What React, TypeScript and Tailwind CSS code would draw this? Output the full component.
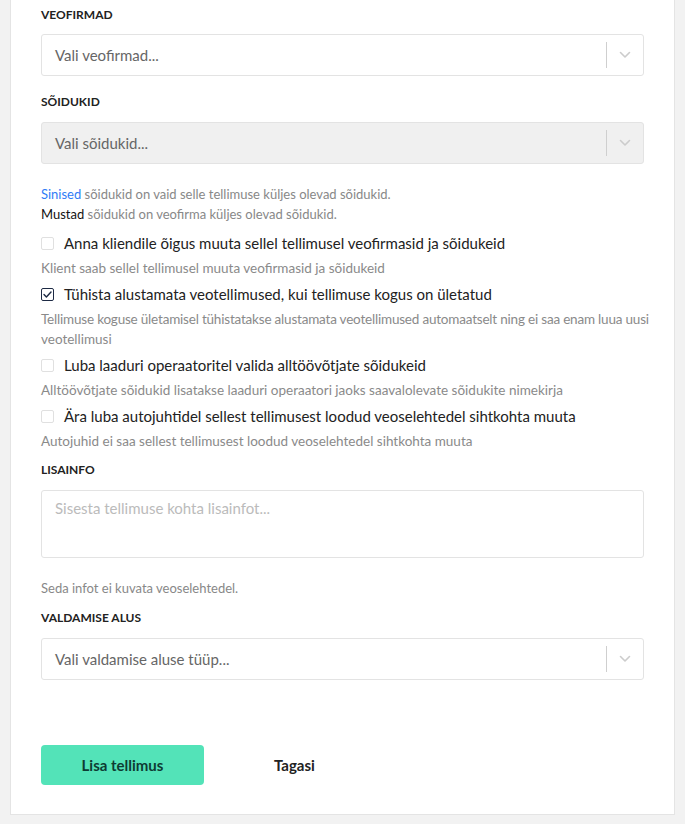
import React from 'react';

const FONT = { fontFamily: 'Lato, "Open Sans", sans-serif' };

function Chevron() {
  return (
    <svg width="12" height="8" viewBox="0 0 12 8" fill="none">
      <path d="M1.5 1.5L6 6L10.5 1.5" stroke="#cccccc" strokeWidth="1.6" strokeLinecap="round" strokeLinejoin="round" />
    </svg>
  );
}

function Select({ placeholder, disabled }: { placeholder: string; disabled?: boolean }) {
  return (
    <div
      className={`flex h-[42px] items-center rounded-[3px] border border-[#e3e3e3] ${disabled ? 'bg-[#f0f0f0]' : 'bg-white'}`}
    >
      <span className="flex-1 pl-[13px] text-[15px] text-[#666]">{placeholder}</span>
      <span className="h-[26px] w-px bg-[#cfcfcf]" />
      <span className="flex w-[36px] items-center justify-center">
        <Chevron />
      </span>
    </div>
  );
}

function Label({ children }: { children: React.ReactNode }) {
  return <div className="text-[12px] font-bold uppercase leading-[16px] text-[#222]">{children}</div>;
}

function Check({ checked, label, hint }: { checked?: boolean; label: string; hint: React.ReactNode }) {
  return (
    <div className="pb-[3px]">
      <div className="flex h-[26px] items-center gap-[10px]">
        {checked ? (
          <span className="flex h-[13px] w-[13px] items-center justify-center rounded-[2px] border border-[#1d2a44] bg-white">
            <svg width="9" height="7" viewBox="0 0 9 7" fill="none">
              <path d="M1 3.6L3.4 6L8 1" stroke="#1d2a44" strokeWidth="1.4" strokeLinecap="round" strokeLinejoin="round" />
            </svg>
          </span>
        ) : (
          <span className="h-[13px] w-[13px] rounded-[2px] border border-[#e0e0e0] bg-white" />
        )}
        <span className="text-[15px] text-[#222]">{label}</span>
      </div>
      <div className="mt-[2px] text-[13.5px] leading-[20px] text-[#8a8a8a]">{hint}</div>
    </div>
  );
}

export default function App() {
  return (
    <div className="min-h-[824px] bg-[#f2f2f2]" style={FONT}>
      <div className="mx-[10px] border-x border-b border-[#e4e4e4] bg-white px-[30px] pt-[7px] pb-[29px]">
        <Label>Veofirmad</Label>
        <div className="mt-[11px]">
          <Select placeholder="Vali veofirmad..." />
        </div>

        <div className="mt-[18px]">
          <Label>Sõidukid</Label>
        </div>
        <div className="mt-[12px]">
          <Select placeholder="Vali sõidukid..." disabled />
        </div>

        <div className="mt-[20px] text-[13px] leading-[20px] text-[#888]">
          <div>
            <span className="text-[#2f7cf6]">Sinised</span> sõidukid on vaid selle tellimuse küljes olevad sõidukid.
          </div>
          <div>
            <span className="text-[#111]">Mustad</span> sõidukid on veofirma küljes olevad sõidukid.
          </div>
        </div>

        <div className="mt-[6px] flex flex-col">
          <Check
            label="Anna kliendile õigus muuta sellel tellimusel veofirmasid ja sõidukeid"
            hint="Klient saab sellel tellimusel muuta veofirmasid ja sõidukeid"
          />
          <Check
            checked
            label="Tühista alustamata veotellimused, kui tellimuse kogus on ületatud"
            hint={
              <>
                <span className="block whitespace-nowrap tracking-[-0.2px]">
                  Tellimuse koguse ületamisel tühistatakse alustamata veotellimused automaatselt ning ei saa enam luua uusi
                </span>
                <span className="block">veotellimusi</span>
              </>
            }
          />
          <Check
            label="Luba laaduri operaatoritel valida alltöövõtjate sõidukeid"
            hint="Alltöövõtjate sõidukid lisatakse laaduri operaatori jaoks saavalolevate sõidukite nimekirja"
          />
          <Check
            label="Ära luba autojuhtidel sellest tellimusest loodud veoselehtedel sihtkohta muuta"
            hint="Autojuhid ei saa sellest tellimusest loodud veoselehtedel sihtkohta muuta"
          />
        </div>

        <div className="mt-[8px]">
          <Label>Lisainfo</Label>
        </div>
        <div className="mt-[12px] h-[68px] rounded-[3px] border border-[#e3e3e3] px-[13px] pt-[6px] text-[15px] text-[#bbb]">
          Sisesta tellimuse kohta lisainfot...
        </div>
        <div className="mt-[20px] text-[13px] leading-[20px] text-[#888]">Seda infot ei kuvata veoselehtedel.</div>

        <div className="mt-[12px]">
          <Label>Valdamise alus</Label>
        </div>
        <div className="mt-[12px]">
          <Select placeholder="Vali valdamise aluse tüüp..." />
        </div>

        <div className="mt-[65px] flex items-center">
          <button className="h-[40px] w-[163px] rounded-[4px] bg-[#53e3b8] text-[15px] font-bold text-[#0e3b33]">
            Lisa tellimus
          </button>
          <button className="ml-[70px] text-[15px] font-bold text-[#222]">Tagasi</button>
        </div>
      </div>
    </div>
  );
}
